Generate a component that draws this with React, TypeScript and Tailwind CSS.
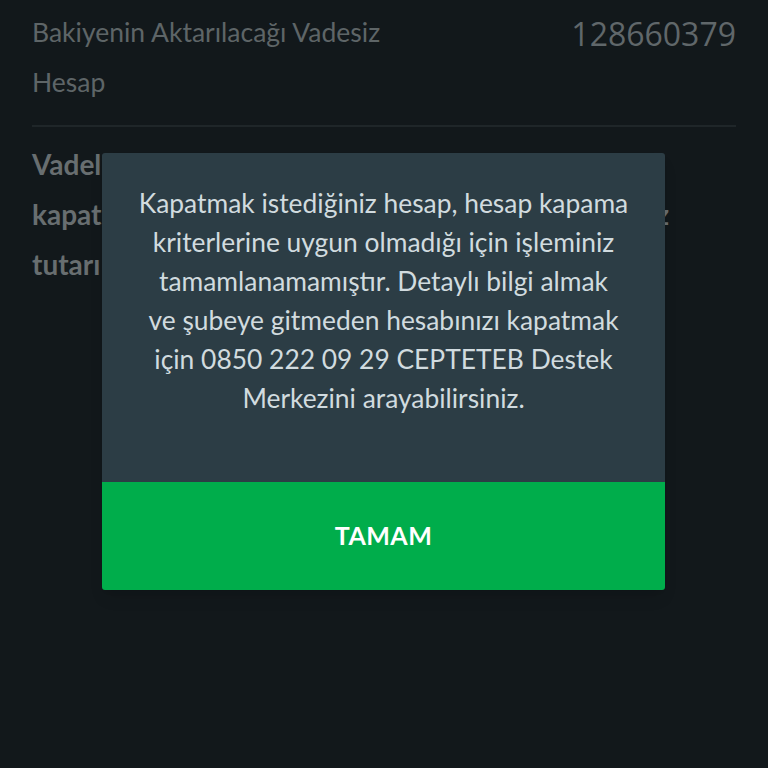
import React from "react";

export default function App() {
  return (
    <div
      className="relative h-[768px] w-[768px] overflow-hidden bg-[#12181b]"
      style={{ fontFamily: "Lato, 'Open Sans', sans-serif" }}
    >
      <div className="px-8 pt-[7px]">
        <div className="flex items-start justify-between">
          <div className="text-[26.5px] leading-[50px] text-[#5e6567]">
            Bakiyenin Aktarılacağı Vadesiz
            <br />
            Hesap
          </div>
          <div
            className="pt-[6px] text-[32px] leading-[42px] text-[#60676a]"
            style={{ fontFamily: "'Open Sans', sans-serif" }}
          >
            128660379
          </div>
        </div>
        <div className="mt-[18px] h-[2px] bg-[#1f2629]" />
        <div className="mt-[12px] text-[28px] font-bold leading-[50px] text-[#686e70]">
          <div>Vadeli hesabınızın kapatılması halinde</div>
          <div className="w-[637px] [text-align-last:justify]">
            kapatma tarihine kadar işlemiş olan faiz
          </div>
          <div>tutarı vadesiz hesabınıza aktarılır.</div>
        </div>
      </div>

      <div className="absolute left-[102px] top-[153px] w-[563px] overflow-hidden rounded-[3px] shadow-lg">
        <div className="bg-[#2c3d45] px-3 pb-[64px] pt-[31px] text-center text-[26.4px] leading-[39px] text-[#d1dbdf]">
          Kapatmak istediğiniz hesap, hesap kapama
          <br />
          kriterlerine uygun olmadığı için işleminiz
          <br />
          tamamlanamamıştır. Detaylı bilgi almak
          <br />
          ve şubeye gitmeden hesabınızı kapatmak
          <br />
          için 0850 222 09 29 CEPTETEB Destek
          <br />
          Merkezini arayabilirsiniz.
        </div>
        <div className="flex h-[108px] items-center justify-center bg-[#00ad4b] text-[25px] font-bold tracking-[0.5px] text-white">
          TAMAM
        </div>
      </div>
    </div>
  );
}
